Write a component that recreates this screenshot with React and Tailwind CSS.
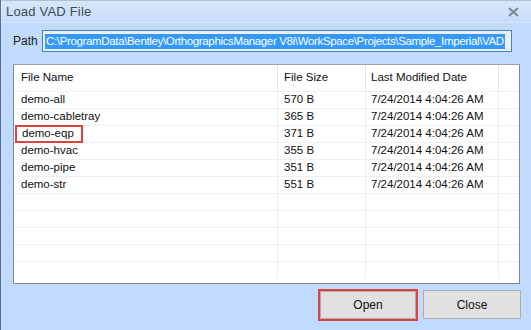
import React from "react";

const rows = [
  ["demo-all", "570 B", "7/24/2014 4:04:26 AM"],
  ["demo-cabletray", "365 B", "7/24/2014 4:04:26 AM"],
  ["demo-eqp", "371 B", "7/24/2014 4:04:26 AM"],
  ["demo-hvac", "355 B", "7/24/2014 4:04:26 AM"],
  ["demo-pipe", "351 B", "7/24/2014 4:04:26 AM"],
  ["demo-str", "551 B", "7/24/2014 4:04:26 AM"],
  ["", "", ""],
  ["", "", ""],
  ["", "", ""],
  ["", "", ""],
  ["", "", ""],
];

export default function App() {
  return (
    <div
      className="w-[531px] h-[330px] overflow-hidden flex flex-col bg-[#c0dbfd] border-l border-l-[#56708f] text-[#111] text-[11.5px]"
      style={{ fontFamily: '"Liberation Sans", Arial, sans-serif' }}
    >
      {/* title bar */}
      <div className="h-[23px] shrink-0 flex items-center justify-between pl-[4px] pr-[12px] bg-gradient-to-b from-[#d7e6fa] to-[#c9ddf8] border-t border-t-[#aebfd6] border-b border-b-[#d6e5fb] border-l border-l-[#e2edfc]">
        <span className="text-[13px] text-[#3d4b5e] tracking-[0.2px]">Load VAD File</span>
        <svg width="11" height="10" viewBox="0 0 11 10">
          <path d="M1 1 L10 9 M10 1 L1 9" stroke="#7d8896" strokeWidth="2.2" />
        </svg>
      </div>

      {/* path row */}
      <div className="flex items-center mt-[7px] h-[22px]">
        <span className="w-[41px] pl-[12px] text-[12px] text-[#222]">Path</span>
        <div className="w-[470px] h-[22px] border border-[#3c83d3] bg-[#eeeeee] flex items-center pl-[2px]">
          <span className="bg-[#3399ff] text-white leading-[15px] px-[1px] tracking-[-0.35px] text-[11.5px]">
            C:\ProgramData\Bentley\OrthographicsManager V8i\WorkSpace\Projects\Sample_Imperial\VAD
          </span>
        </div>
      </div>

      {/* list */}
      <div className="ml-[12px] mt-[12px] w-[507px] h-[220px] border border-[#828790] border-t-[#a0a0a0] bg-white overflow-hidden">
        <div className="flex h-[26px] items-center">
          <div className="w-[264px] h-full pl-[7px] flex items-center border-r border-r-[#e5e5e5]">File Name</div>
          <div className="w-[88px] h-full pl-[6px] flex items-center border-r border-r-[#e5e5e5]">File Size</div>
          <div className="w-[133px] h-full pl-[5px] flex items-center border-r border-r-[#e5e5e5]">Last Modified Date</div>
        </div>
        {rows.map((r, i) => (
          <div key={i} className="flex h-[17px] border-t border-t-[#efefef]">
            <div className="w-[264px] h-full pl-[7px] flex items-center border-r border-r-[#efefef]">
              {i === 2 ? (
                <span className="-ml-[6px] pl-[5px] pr-[7px] h-[18px] -mt-[1px] border-2 border-[#e0403f] flex items-center">
                  {r[0]}
                </span>
              ) : (
                r[0]
              )}
            </div>
            <div className="w-[88px] h-full pl-[6px] flex items-center border-r border-r-[#efefef]">{r[1]}</div>
            <div className="w-[133px] h-full pl-[5px] flex items-center border-r border-r-[#efefef]">{r[2]}</div>
          </div>
        ))}
      </div>

      {/* buttons */}
      <div className="flex justify-end mt-[5px] pr-[10px] gap-[5px]">
        <div className="w-[100px] h-[32px] border-2 border-[#e0403f] p-[0px] flex">
          <button className="flex-1 bg-[#e1e1e1] border border-[#adadad] text-[12px] text-[#111]">Open</button>
        </div>
        <button className="w-[98px] h-[29px] mt-[1px] bg-[#e1e1e1] border border-[#adadad] text-[12px] text-[#111]">Close</button>
      </div>
    </div>
  );
}
